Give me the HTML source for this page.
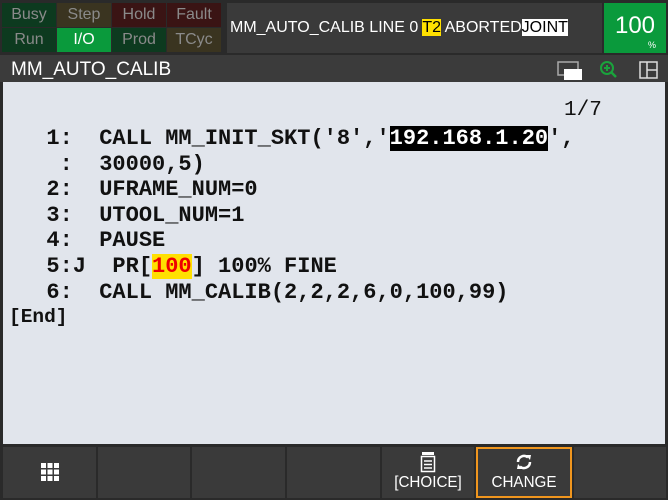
<!DOCTYPE html>
<html><head><style>
*{margin:0;padding:0;box-sizing:border-box}
body{width:668px;height:500px;background:#2a2a2a;position:relative;overflow:hidden;font-family:"Liberation Sans",sans-serif}
.c{position:absolute;width:54px;height:24px;color:#8a8a8a;font-size:16px;text-align:center;line-height:24px}
#msg{position:absolute;left:227px;top:3px;width:375px;height:50px;background:#3a3a3a;color:#fff;font-size:16px;line-height:50px;padding-left:3px;white-space:nowrap}
#pct{position:absolute;left:604px;top:3px;width:62px;height:50px;background:#0a9a3c;color:#fff;text-align:center}
#title{position:absolute;left:0;top:55px;width:668px;height:27px;background:#3b3b3b;color:#fff;font-size:19px;line-height:29px;padding-left:11px}
#content{position:absolute;left:3px;top:82px;width:662px;height:362px;background:#e1e5ec}
pre{position:absolute;left:20px;top:126px;font-family:"Liberation Mono",monospace;font-weight:bold;font-size:22px;line-height:25.6px;color:#111}
.btn{position:absolute;top:447px;height:51px;background:#3a3a3a;color:#fff;font-size:16px;text-align:center}
.btn div{transform:scaleX(0.95)}
</style></head><body>
<div class="c" style="left:2px;top:3px;background:#0d3a1f">Busy</div>
<div class="c" style="left:57px;top:3px;background:#3a3420">Step</div>
<div class="c" style="left:112px;top:3px;background:#3a1414">Hold</div>
<div class="c" style="left:167px;top:3px;background:#3a1414">Fault</div>
<div class="c" style="left:2px;top:28px;background:#0d3a1f">Run</div>
<div class="c" style="left:57px;top:28px;background:#0a9a3c;color:#fff">I/O</div>
<div class="c" style="left:112px;top:28px;background:#0d3a1f">Prod</div>
<div class="c" style="left:167px;top:28px;background:#3a3420">TCyc</div>
<div id="msg">MM_AUTO_CALIB LINE 0 <span style="background:#ffe000;color:#000">T2</span> ABORTED<span style="background:#fff;color:#000">JOINT</span></div>
<div id="pct"><div style="font-size:24px;line-height:30px;margin-top:8px">100</div><div style="font-size:9px;line-height:8px;margin-left:34px">%</div></div>
<div id="title">MM_AUTO_CALIB</div>
<svg style="position:absolute;left:556px;top:58px" width="112" height="24">
<rect x="2" y="4" width="20" height="13" fill="none" stroke="#aaa" stroke-width="1.5"/><rect x="8" y="11" width="18" height="11" fill="#fff"/>
<circle cx="51" cy="10" r="6" fill="none" stroke="#1aa33c" stroke-width="2"/><path d="M48 10h6M51 7v6" stroke="#1aa33c" stroke-width="2"/><path d="M55 14l5 5" stroke="#1aa33c" stroke-width="2.5"/>
<rect x="84" y="4" width="17" height="16" fill="none" stroke="#ddd" stroke-width="1.5"/><path d="M91 4v16M91 12h10" stroke="#ddd" stroke-width="1.5"/>
</svg>
<div id="content"></div>
<div style="position:absolute;left:564px;top:99px;font-family:'Liberation Mono',monospace;font-size:21px;color:#111">1/7</div>
<pre>  1:  CALL MM_INIT_SKT('8','<span style="background:#000;color:#fff">192.168.1.20</span>',
   :  30000,5)
  2:  UFRAME_NUM=0
  3:  UTOOL_NUM=1
  4:  PAUSE
  5:J  PR[<span style="background:#ffe000;color:#e00">100</span>] 100% FINE
  6:  CALL MM_CALIB(2,2,2,6,0,100,99)</pre>
<div style="position:absolute;left:9px;top:305px;font-family:'Liberation Mono',monospace;font-weight:bold;font-size:19.5px;line-height:25px;color:#111">[End]</div>
<div class="btn" style="left:3px;width:93px"><svg width="20" height="20" style="margin-top:15px" viewBox="0 0 20 20" fill="#fff"><rect x="1" y="1" width="5" height="5"/><rect x="7.5" y="1" width="5" height="5"/><rect x="14" y="1" width="5" height="5"/><rect x="1" y="7.5" width="5" height="5"/><rect x="7.5" y="7.5" width="5" height="5"/><rect x="14" y="7.5" width="5" height="5"/><rect x="1" y="14" width="5" height="5"/><rect x="7.5" y="14" width="5" height="5"/><rect x="14" y="14" width="5" height="5"/></svg></div>
<div class="btn" style="left:98px;width:92px"></div>
<div class="btn" style="left:192px;width:93px"></div>
<div class="btn" style="left:287px;width:93px"></div>
<div class="btn" style="left:382px;width:92px"><svg width="16" height="22" style="margin-top:4px;display:block;margin-left:38px" viewBox="0 0 16 22"><rect x="2" y="1" width="12" height="3" fill="#fff"/><rect x="1.5" y="5.5" width="13" height="15" fill="none" stroke="#fff" stroke-width="1.5"/><path d="M4 10h8M4 13.5h8M4 17h8" stroke="#fff" stroke-width="1.5"/></svg><div style="margin-top:1px">[CHOICE]</div></div>
<div class="btn" style="left:476px;width:96px;border:2px solid #f0961e"><svg width="18" height="18" style="margin-top:4px;display:block;margin-left:37px" viewBox="0 0 18 18"><path d="M3 9a6 6 0 0 1 10-4.5" fill="none" stroke="#fff" stroke-width="2.5"/><path d="M15 9a6 6 0 0 1-10 4.5" fill="none" stroke="#fff" stroke-width="2.5"/><path d="M11 2l5 0-1 5z" fill="#fff"/><path d="M7 16l-5 0 1-5z" fill="#fff"/></svg><div style="margin-top:3px">CHANGE</div></div>
<div class="btn" style="left:574px;width:92px"></div>
</body></html>
